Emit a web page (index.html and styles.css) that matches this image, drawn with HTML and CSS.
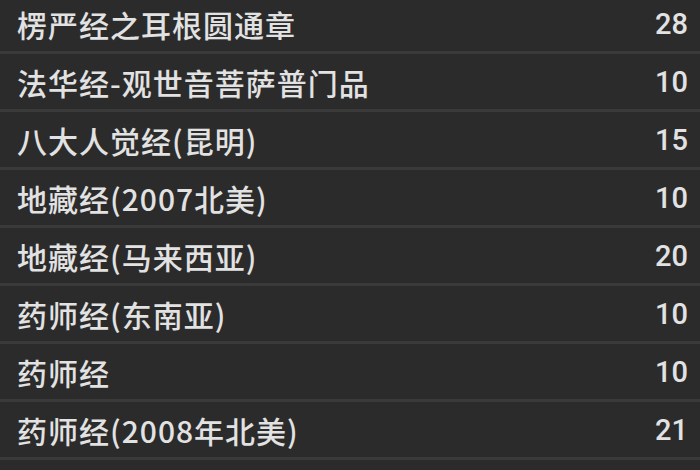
FILE: index.html
```html
<!DOCTYPE html>
<html lang="zh">
<head>
<meta charset="utf-8">
<link rel="stylesheet" href="styles.css">
</head>
<body>
<ul class="list">
  <li class="row"><span class="title">楞严经之耳根圆通章</span><span class="count">28</span></li>
  <li class="row"><span class="title">法华经-观世音菩萨普门品</span><span class="count">10</span></li>
  <li class="row"><span class="title">八大人觉经(昆明)</span><span class="count">15</span></li>
  <li class="row"><span class="title">地藏经(2007北美)</span><span class="count">10</span></li>
  <li class="row"><span class="title">地藏经(马来西亚)</span><span class="count">20</span></li>
  <li class="row"><span class="title">药师经(东南亚)</span><span class="count">10</span></li>
  <li class="row"><span class="title">药师经</span><span class="count">10</span></li>
  <li class="row"><span class="title">药师经(2008年北美)</span><span class="count">21</span></li>
</ul>
</body>
</html>
```
FILE: styles.css
```css
html, body {
  margin: 0;
  padding: 0;
  background: #2b2b2b;
  width: 700px;
  height: 470px;
  overflow: hidden;
}
.list {
  list-style: none;
  margin: -4px 0 0 0;
  padding: 0;
}
.row {
  box-sizing: content-box;
  height: 54px;
  padding: 1px 12px 0 17px;
  border-bottom: 3px solid #3a3a3a;
  display: flex;
  align-items: center;
  justify-content: space-between;
  font-family: "Noto Sans CJK SC", "Noto Sans", sans-serif;
  color: #e2e2e2;
}
.title {
  font-size: 30px;
  font-weight: 500;
  letter-spacing: 1px;
}
.count {
  font-family: Roboto, "Noto Sans", sans-serif;
  font-size: 29px;
  font-weight: 500;
}
```
